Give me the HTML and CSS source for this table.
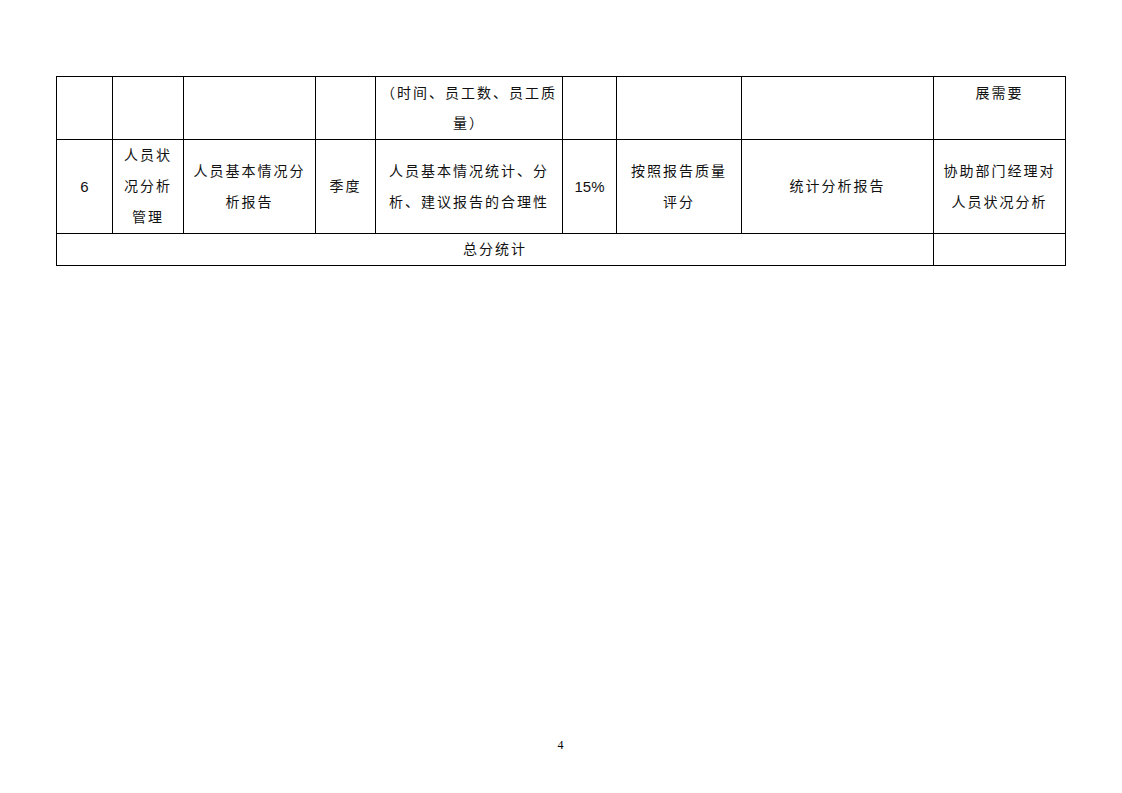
FILE: index.html
```html
<!DOCTYPE html>
<html lang="zh-CN">
<head>
<meta charset="utf-8">
<title>人员状况分析</title>
<link rel="stylesheet" href="styles.css">
</head>
<body>
<div class="page">
  <table class="kpi">
    <colgroup>
      <col class="c1"><col class="c2"><col class="c3"><col class="c4"><col class="c5"><col class="c6"><col class="c7"><col class="c8"><col class="c9">
    </colgroup>
    <tr class="r1">
      <td></td>
      <td></td>
      <td></td>
      <td></td>
      <td class="top">（时间、员工数、员工质<br>量）</td>
      <td></td>
      <td></td>
      <td></td>
      <td class="top">展需要</td>
    </tr>
    <tr class="r2">
      <td class="num">6</td>
      <td>人员状<br>况分析<br>管理</td>
      <td>人员基本情况分<br>析报告</td>
      <td>季度</td>
      <td>人员基本情况统计、分<br>析、建议报告的合理性</td>
      <td class="num">15%</td>
      <td>按照报告质量<br>评分</td>
      <td>统计分析报告</td>
      <td>协助部门经理对<br>人员状况分析</td>
    </tr>
    <tr class="r3">
      <td colspan="8">总分统计</td>
      <td></td>
    </tr>
  </table>
  <div class="pageno">4</div>
</div>
</body>
</html>
```

FILE: styles.css
```css
html, body {
  margin: 0;
  padding: 0;
  background: #ffffff;
}

.page {
  width: 1122px;
  height: 793px;
  display: flex;
  flex-direction: column;
  box-sizing: border-box;
  padding: 76px 0 0 56px;
}

.kpi {
  border-collapse: collapse;
  table-layout: fixed;
  width: 1009px;
  font-family: "Liberation Sans", "Noto Sans CJK SC", sans-serif;
  font-size: 14px;
  color: #111111;
}

.c1 { width: 56px; }
.c2 { width: 71px; }
.c3 { width: 132px; }
.c4 { width: 60px; }
.c5 { width: 187px; }
.c6 { width: 54px; }
.c7 { width: 125px; }
.c8 { width: 192px; }
.c9 { width: 132px; }

.kpi td {
  border: 1px solid #000000;
  padding: 0;
  text-align: center;
  vertical-align: middle;
  line-height: 31px;
  letter-spacing: 2px;
  white-space: nowrap;
  overflow: hidden;
}

.kpi td.top {
  vertical-align: top;
  line-height: 30px;
  padding-top: 1px;
}

.kpi td.num {
  letter-spacing: 0;
  font-size: 15px;
}

.r1 { height: 63px; }
.r2 { height: 93px; }
.r3 { height: 32px; }

.pageno {
  margin-top: auto;
  margin-bottom: 41px;
  width: 1009px;
  text-align: center;
  font-family: "Liberation Serif", serif;
  font-size: 12px;
  line-height: 14px;
  color: #000000;
}
```
